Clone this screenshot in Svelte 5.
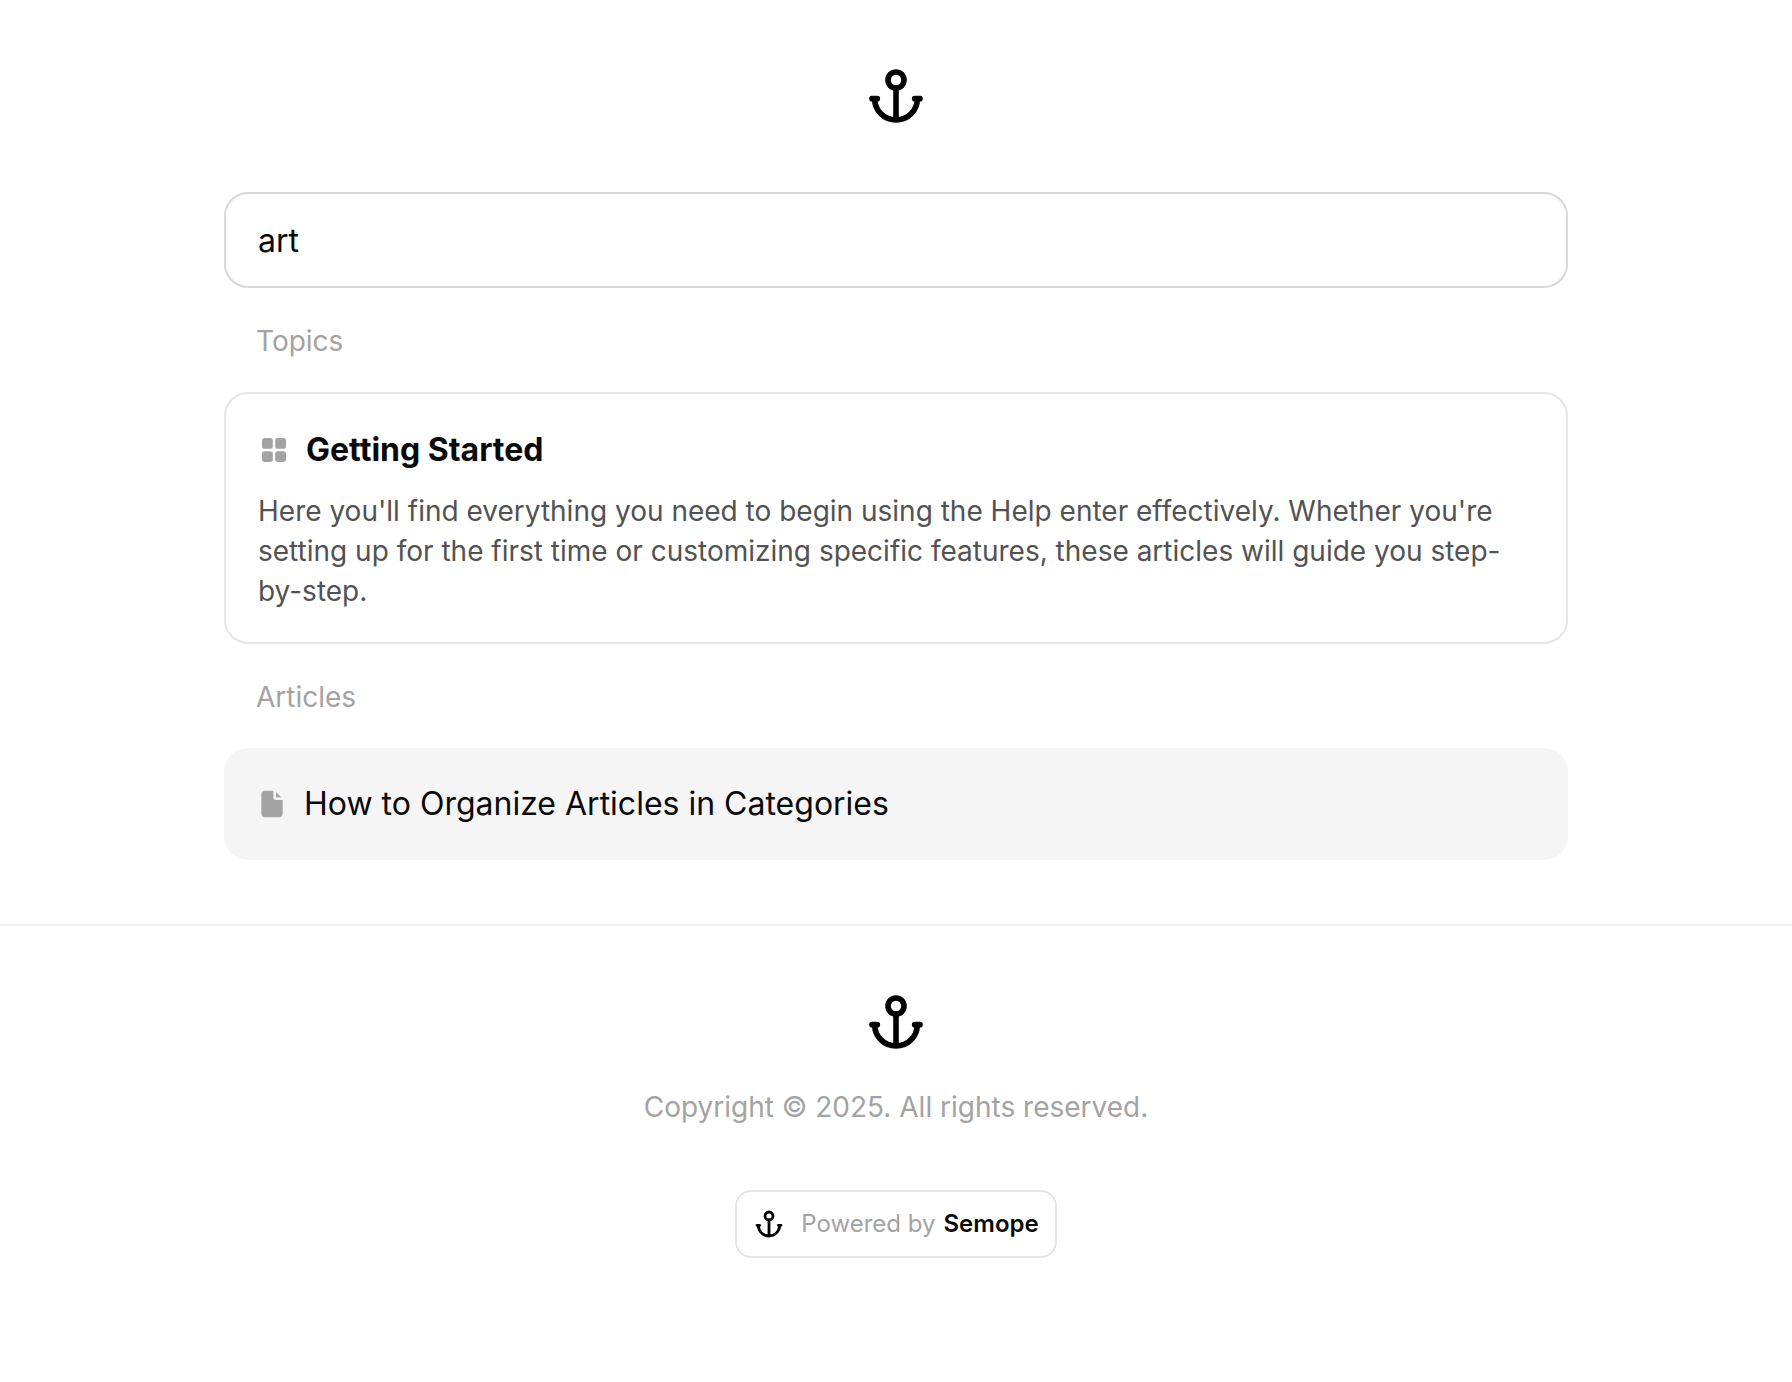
<script>
  let query = $state('art');
  const topics = [
    {
      title: 'Getting Started',
      text: "Here you'll find everything you need to begin using the Help enter effectively. Whether you're setting up for the first time or customizing specific features, these articles will guide you step-by-step."
    }
  ];
  const articles = ['How to Organize Articles in Categories'];
</script>

{#snippet anchor(small)}
  <svg class="anchor" class:small viewBox="0 0 24 24" aria-hidden="true">
    <circle cx="12" cy="6" r="3" />
    <path d="M12 9v12M3 13h2M19 13h2M4 13a8 8 0 0 0 16 0" />
  </svg>
{/snippet}

<div class="page">
  <header>
    <a href="#home" aria-label="Home">{@render anchor(false)}</a>
  </header>

  <main>
    <input type="text" aria-label="Search" bind:value={query} />

    <h2>Topics</h2>
    {#each topics as topic}
      <a class="topic" href="#topic">
        <h3>
          <svg class="icon" viewBox="0 0 24 24" aria-hidden="true">
            <rect x="3" y="3" width="8.1" height="8.1" rx="2" />
            <rect x="12.9" y="3" width="8.1" height="8.1" rx="2" />
            <rect x="3" y="12.9" width="8.1" height="8.1" rx="2" />
            <rect x="12.9" y="12.9" width="8.1" height="8.1" rx="2" />
          </svg>
          {topic.title}
        </h3>
        <p>{topic.text}</p>
      </a>
    {/each}

    <h2>Articles</h2>
    {#each articles as title}
      <a class="article" href="#article">
        <svg class="icon" viewBox="0 0 24 24" aria-hidden="true">
          <path d="M7 2h6v5a2 2 0 0 0 2 2h5v10a3 3 0 0 1-3 3H7a3 3 0 0 1-3-3V5a3 3 0 0 1 3-3Z" />
          <path d="M15 3v4h4Z" />
        </svg>
        {title}
      </a>
    {/each}
  </main>

  <footer>
    <a href="#home" aria-label="Home">{@render anchor(false)}</a>
    <p>Copyright © 2025. All rights reserved.</p>
    <a class="powered" href="#semope">
      {@render anchor(true)}
      <span class="credit"><span>Powered by</span> <strong>Semope</strong></span>
    </a>
  </footer>
</div>

<style>
  :global(body) {
    background: #fff;
  }
  .page {
    font-family: Inter, sans-serif;
    color: #0a0a0a;
  }
  .page * {
    box-sizing: border-box;
  }
  a {
    color: inherit;
    text-decoration: none;
  }
  h2,
  h3,
  p {
    margin: 0;
  }
  header {
    display: flex;
    justify-content: center;
    padding: 64px;
  }
  header a,
  footer a {
    display: flex;
  }
  .anchor {
    display: block;
    width: 64px;
    height: 64px;
    fill: none;
    stroke: #000;
    stroke-width: 2.1;
    stroke-linecap: round;
    stroke-linejoin: round;
  }
  .anchor.small {
    width: 32px;
    height: 32px;
  }
  main {
    max-width: 1344px;
    margin: 0 auto;
    padding-bottom: 64px;
  }
  input {
    display: block;
    width: 100%;
    height: 96px;
    padding: 0 32px;
    border: 2px solid #d8d8d8;
    border-radius: 24px;
    background: #fff;
    color: inherit;
    font: inherit;
    font-size: 32px;
    outline: none;
  }
  h2 {
    padding: 33px 32px 31px;
    font-size: 28px;
    line-height: 40px;
    font-weight: 400;
    color: #a3a3a3;
  }
  .topic {
    display: block;
    padding: 32px 32px 31px;
    border: 2px solid #e5e5e5;
    border-radius: 24px;
  }
  h3 {
    display: flex;
    align-items: center;
    gap: 16px;
    margin-bottom: 17px;
    font-size: 32px;
    line-height: 48px;
    font-weight: 700;
  }
  .topic p {
    font-size: 28px;
    line-height: 40px;
    color: #525252;
  }
  .icon {
    flex: none;
    width: 32px;
    height: 32px;
    fill: #a3a3a3;
  }
  .article {
    display: flex;
    align-items: center;
    gap: 16px;
    padding: 32px;
    border-radius: 24px;
    background: #f5f5f5;
    font-size: 32px;
    line-height: 48px;
  }
  footer {
    display: flex;
    flex-direction: column;
    align-items: center;
    padding: 64px;
    border-top: 2px solid #f2f2f2;
    color: #a3a3a3;
  }
  footer p {
    margin: 33px 0 63px;
    font-size: 28px;
    line-height: 40px;
  }
  footer .powered {
    align-items: center;
    gap: 16px;
    padding: 16px;
    border: 2px solid #e5e5e5;
    border-radius: 16px;
    font-size: 24px;
    line-height: 32px;
  }
  .credit {
    display: flex;
    gap: 8px;
  }
  strong {
    font-weight: 600;
    color: #0a0a0a;
  }
</style>
